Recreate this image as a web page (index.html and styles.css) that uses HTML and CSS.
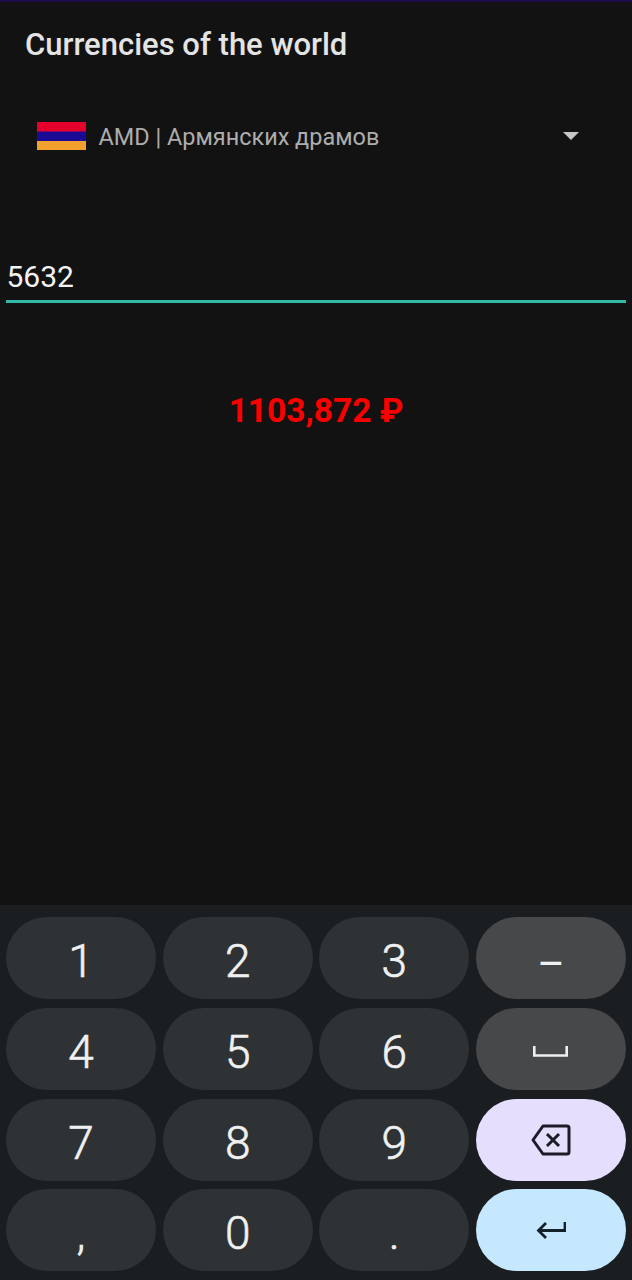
FILE: index.html
```html
<!DOCTYPE html>
<html lang="ru">
<head>
<meta charset="utf-8">
<title>Currencies of the world</title>
<link rel="stylesheet" href="styles.css">
</head>
<body>
<div class="app">
  <div class="status-line"></div>
  <header class="title">Currencies of the world</header>
  <div class="spinner">
    <svg class="flag" viewBox="0 0 49 28" aria-hidden="true"><rect width="49" height="10" fill="#e4002b"/><rect y="9.5" width="49" height="9.5" fill="#1a0a96"/><rect y="19" width="49" height="9" fill="#f2a02e"/></svg>
    <span class="spinner-label">AMD | Армянских драмов</span>
    <svg class="caret" viewBox="0 0 16 8" aria-hidden="true"><path d="M0 0h16L8 8z"/></svg>
  </div>
  <div class="field">5632</div>
  <div class="result">1103,872 ₽</div>
  <div class="keyboard">
    <div class="key">1</div>
    <div class="key">2</div>
    <div class="key">3</div>
    <div class="key fn sym">–</div>
    <div class="key">4</div>
    <div class="key">5</div>
    <div class="key">6</div>
    <div class="key fn"><svg class="icon-space" viewBox="0 0 35 11" aria-hidden="true"><path d="M1.300 0v9.500h32.400V0" fill="none" stroke="#eeeeee" stroke-width="2.600"/></svg></div>
    <div class="key">7</div>
    <div class="key">8</div>
    <div class="key">9</div>
    <div class="key del"><svg class="icon-del" viewBox="0 0 40 32" aria-hidden="true"><path d="M12 2h24a2 2 0 0 1 2 2v24a2 2 0 0 1-2 2H12L2 16z M16 10l12 12 M28 10L16 22" fill="none" stroke="#1d1b26" stroke-width="3" stroke-linejoin="round"/></svg></div>
    <div class="key punct">,</div>
    <div class="key">0</div>
    <div class="key punct">.</div>
    <div class="key enter"><svg class="icon-enter" viewBox="0 0 30 19" aria-hidden="true"><path d="M29 1v8.500H3 M10 2L2.500 9.500l7.500 7.500" fill="none" stroke="#14202a" stroke-width="2.800"/></svg></div>
  </div>
</div>
</body>
</html>
```
FILE: styles.css
```css
* { box-sizing: border-box; }
html, body { margin: 0; padding: 0; }
body { background: #121212; font-family: Roboto, "Liberation Sans", sans-serif; }
.app { width: 632px; height: 1280px; display: flex; flex-direction: column; overflow: hidden; }
.status-line { height: 2px; background: #1c0c4a; flex: none; }
.title { margin: 25px 0 0 25px; font-size: 31px; line-height: 36px; font-weight: 500; color: #e4e4e4; }
.spinner { display: flex; align-items: center; margin-top: 49px; padding: 0 53px 0 37px; height: 48px; }
.flag { width: 49px; height: 28px; flex: none; }
.spinner-label { margin-left: 12.500px; padding-top: 2px; font-size: 23.450px; color: #adadad; flex: 1; }
.caret { width: 16px; height: 8px; fill: #c6c6c6; flex: none; }
.field { margin: 99px 6px 0; padding: 0 0.500px 5px; border-bottom: 3px solid #2fb9a6; font-size: 30px; line-height: 36px; color: #f2f2f2; }
.result { margin-top: 88px; text-align: center; font-size: 33.500px; line-height: 40px; font-weight: 700; color: #fb0000; }
.keyboard { margin-top: auto; height: 375px; background: #1a1e21; padding: 12px 6px 9px; display: grid; grid-template-columns: repeat(4, 1fr); grid-auto-rows: 82px; gap: 8.800px 6.670px; }
.key { border-radius: 41px; background: #2e3235; color: #f0f0f0; font-size: 46px; font-weight: 300; -webkit-text-stroke: 0.600px #f0f0f0; padding-top: 6px; display: flex; align-items: center; justify-content: center; }
.fn { background: #46484a; }
.sym { font-size: 42px; padding-top: 12px; font-weight: 400; -webkit-text-stroke: 0; }
.del { background: #e6defd; padding-top: 0; }
.enter { background: #c6e8fe; padding-top: 0; }
.icon-space { width: 35px; height: 11px; }
.icon-del { width: 40px; height: 32px; }
.icon-enter { width: 30px; height: 19px; }
```
